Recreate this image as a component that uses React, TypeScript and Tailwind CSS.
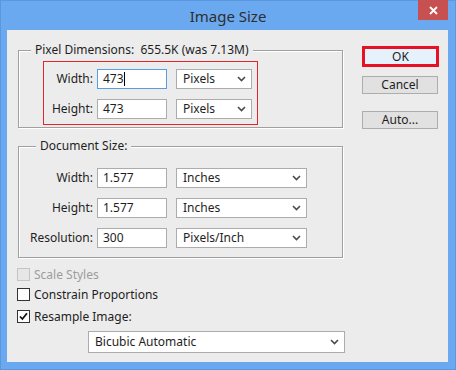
import React from "react";

const Chevron: React.FC = () => (
  <svg width="9" height="6" viewBox="0 0 9 6" className="shrink-0">
    <polyline points="1,1 4.5,4.5 8,1" fill="none" stroke="#4a4a4a" strokeWidth="1.6" />
  </svg>
);

const Select: React.FC<{ value: string; width: string; height?: string }> = ({ value, width, height = "h-[20px]" }) => (
  <div className={`${width} ${height} flex items-center justify-between bg-white border border-[#acacac] pl-[6px] pr-[5px]`}>
    <span>{value}</span>
    <Chevron />
  </div>
);

const Input: React.FC<{ value: string; focused?: boolean }> = ({ value, focused }) => (
  <div
    className={`w-[70px] h-[20px] flex items-center bg-white border pl-[5px] ${
      focused ? "border-[#569de5]" : "border-[#acacac]"
    }`}
  >
    <span>{value}</span>
    {focused && <span className="w-px h-[14px] bg-black" />}
  </div>
);

const Row: React.FC<{ label: string; labelWidth: string; children: React.ReactNode }> = ({ label, labelWidth, children }) => (
  <div className="flex items-center h-[20px]">
    <span className={`${labelWidth} text-right`}>{label}</span>
    <div className="ml-[4px]">{children}</div>
  </div>
);

const Check: React.FC<{ checked?: boolean; disabled?: boolean; label: string }> = ({ checked, disabled, label }) => (
  <div className="flex items-center h-[13px]">
    <div
      className={`w-[13px] h-[13px] border flex items-center justify-center ${
        disabled ? "border-[#c4c4c4] bg-[#e6e6e6]" : "border-[#333] bg-white"
      }`}
    >
      {checked && (
        <svg width="9" height="9" viewBox="0 0 9 9">
          <path d="M1 4.5 L3.4 7 L8 1.2" fill="none" stroke="#111" strokeWidth="1.8" />
        </svg>
      )}
    </div>
    <span className={`ml-[4px] ${disabled ? "text-[#9c9c9c]" : ""}`}>{label}</span>
  </div>
);

const App: React.FC = () => {
  return (
    <div className="w-[456px] h-[370px] bg-[#6aa9ef] border border-[#5b97dc] flex flex-col font-['Noto_Sans',sans-serif] text-[12px] leading-[16px] text-[#1e1e1e]">
      {/* Title bar */}
      <div className="relative h-[29px] flex items-center justify-center">
        <span className="text-[15px] text-[#2e2e2e] mt-[1px]">Image Size</span>
        <div className="absolute right-[7px] -top-px w-[30px] h-[20px] bg-[#c75050] flex items-center justify-center">
          <svg width="9" height="9" viewBox="0 0 9 9">
            <path d="M1 1 L8 8 M8 1 L1 8" stroke="#fff" strokeWidth="1.8" />
          </svg>
        </div>
      </div>

      {/* Content */}
      <div className="ml-[6px] mr-[7px] h-[332px] bg-[#ececec] flex">
        <div className="pl-[10px] pt-[20px] w-[336px]">
          {/* Pixel Dimensions */}
          <div className="relative ml-px w-[325px] h-[78px] border border-[#a0a0a0] shadow-[1px_1px_0_#fff,inset_1px_1px_0_#fff]">
            <span className="absolute left-[12px] -top-[9px] px-[4px] bg-[#ececec] whitespace-pre">
              Pixel Dimensions:  655.5K (was 7.13M)
            </span>
            <div className="mt-[10px] ml-[24px] w-[215px] h-[64px] border border-[#e8232a] pt-[7px] flex flex-col gap-[10px]">
              <Row label="Width:" labelWidth="w-[49px]">
                <div className="flex items-center gap-[9px]">
                  <Input value="473" focused />
                  <Select value="Pixels" width="w-[76px]" />
                </div>
              </Row>
              <Row label="Height:" labelWidth="w-[49px]">
                <div className="flex items-center gap-[9px]">
                  <Input value="473" />
                  <Select value="Pixels" width="w-[76px]" />
                </div>
              </Row>
            </div>
          </div>

          {/* Document Size */}
          <div className="relative ml-px mt-[18px] w-[325px] h-[112px] border border-[#a0a0a0] shadow-[1px_1px_0_#fff,inset_1px_1px_0_#fff] pt-[21px] flex flex-col gap-[10px]">
            <span className="absolute left-[17px] -top-[9px] px-[4px] bg-[#ececec]">Document Size:</span>
            <Row label="Width:" labelWidth="w-[74px]">
              <div className="flex items-center gap-[9px]">
                <Input value="1.577" />
                <Select value="Inches" width="w-[131px]" />
              </div>
            </Row>
            <Row label="Height:" labelWidth="w-[74px]">
              <div className="flex items-center gap-[9px]">
                <Input value="1.577" />
                <Select value="Inches" width="w-[131px]" />
              </div>
            </Row>
            <Row label="Resolution:" labelWidth="w-[74px]">
              <div className="flex items-center gap-[9px]">
                <Input value="300" />
                <Select value="Pixels/Inch" width="w-[131px]" />
              </div>
            </Row>
          </div>

          {/* Options */}
          <div className="mt-[10px] flex flex-col">
            <Check disabled label="Scale Styles" />
            <div className="mt-[7px]">
              <Check label="Constrain Proportions" />
            </div>
            <div className="mt-[9px]">
              <Check checked label="Resample Image:" />
            </div>
            <div className="mt-[8px] ml-[71px]">
              <Select value="Bicubic Automatic" width="w-[257px]" height="h-[22px]" />
            </div>
          </div>
        </div>

        {/* Buttons */}
        <div className="ml-[19px] pt-[16px] flex flex-col">
          <div className="w-[77px] h-[21px] border-[3px] border-[#e81123] bg-[#e5f1fb] flex items-center justify-center">
            OK
          </div>
          <div className="mt-[9px] w-[76px] h-[18px] border border-[#adadad] bg-[#e1e1e1] flex items-center justify-center">
            Cancel
          </div>
          <div className="mt-[17px] w-[76px] h-[18px] border border-[#adadad] bg-[#e1e1e1] flex items-center justify-center">
            Auto...
          </div>
        </div>
      </div>
    </div>
  );
};

export default App;
